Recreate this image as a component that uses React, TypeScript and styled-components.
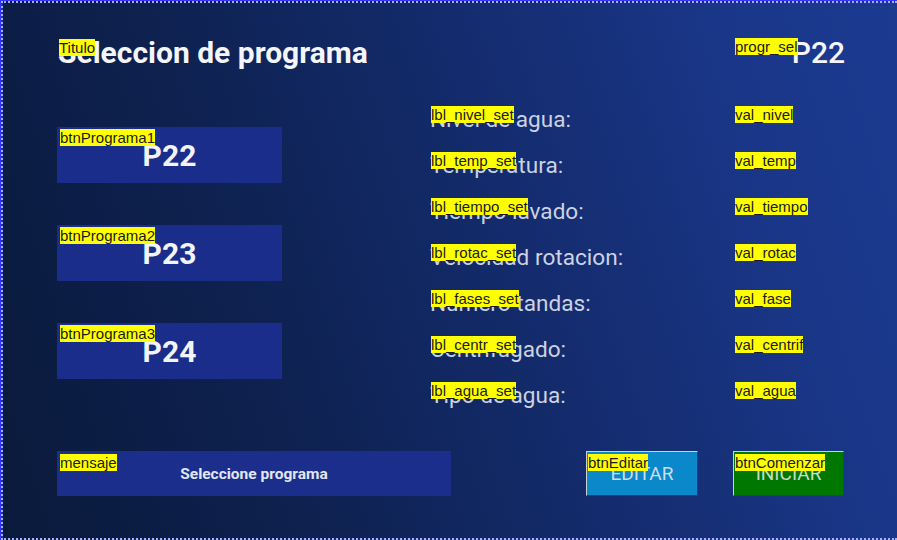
import styled, { createGlobalStyle } from "styled-components";

const GlobalStyle = createGlobalStyle`
    html, body {
        margin: 0;
        padding: 0;
        background: #ffffff;
    }
    #root {
        width: 897px;
        height: 540px;
    }
`;

const Screen = styled.div`
    width: 897px;
    height: 540px;
    box-sizing: border-box;
    border-top: 1px solid #3434ff;
    background: #3434ff;
    overflow: hidden;
`;

// marco punteado del formulario
const Frame = styled.div`
    box-sizing: border-box;
    height: 539px;
    margin-left: 1px;
    border-top: 2px dotted #a9b0ff;
    border-left: 2px dotted #a9b0ff;
    border-bottom: 2px dotted #a9b0ff;
    padding: 35px 52px 0 54px;
    background: linear-gradient(72deg, #0a1a3b 0%, #0e2150 30%, #142c6e 58%, #1a378a 85%, #1b3a90 100%);
    font-family: Roboto, "Liberation Sans", sans-serif;
    color: #ffffff;
    display: flex;
    flex-direction: column;
`;

const Widget = styled.div`
    position: relative;
`;

// etiqueta amarilla con el nombre del objeto
const Tag = styled.span<{ $dx?: number; $dy?: number }>`
    position: absolute;
    top: ${(p) => p.$dy ?? 1}px;
    left: ${(p) => p.$dx ?? 1}px;
    background: #ffff00;
    color: #1a1a1a;
    font-family: "Liberation Sans", Arial, sans-serif;
    font-size: 15px;
    font-weight: 400;
    letter-spacing: 0;
    line-height: 17px;
    padding: 0;
    white-space: nowrap;
    z-index: 2;
`;

const Header = styled.div`
    display: flex;
    justify-content: space-between;
    height: 30px;
`;

const Title = styled.div`
    font-size: 30px;
    line-height: 30px;
    font-weight: 700;
    color: #f4f6fb;
    padding-left: 1px;
`;

const Selected = styled(Widget)`
    width: 110px;
    text-align: right;
    font-size: 30px;
    line-height: 30px;
    font-weight: 500;
    color: #f4f6fb;
`;

const Body = styled.div`
    display: flex;
    margin-top: 38px;
`;

const ProgramList = styled.div`
    width: 225px;
    padding-top: 21px;
    display: flex;
    flex-direction: column;
    gap: 42px;
    margin-right: 148px;
`;

const ProgramButton = styled(Widget)`
    height: 56px;
    background: #1a2d8a;
    display: flex;
    align-items: center;
    justify-content: center;
    font-size: 30px;
    font-weight: 700;
    color: #f2f4fa;
`;

const Fields = styled.div`
    display: grid;
    grid-template-columns: 305px 110px;
    grid-auto-rows: 28px;
    row-gap: 18px;
`;

const FieldLabel = styled(Widget)`
    font-size: 22.6px;
    line-height: 28px;
    color: #ccd2e2;
    white-space: nowrap;
`;

const FieldValue = styled(Widget)`
    font-size: 22px;
    line-height: 28px;
    color: #ffffff;
`;

const Footer = styled.div`
    display: flex;
    margin-top: 41px;
`;

const Message = styled(Widget)`
    width: 394px;
    height: 45px;
    background: #1b2e8b;
    display: flex;
    align-items: center;
    justify-content: center;
    font-size: 15.5px;
    font-weight: 700;
    color: #e2e6f2;
    margin-right: 135px;
`;

const ActionButton = styled(Widget)<{ $bg: string; $fg: string; $gap?: number }>`
    box-sizing: border-box;
    width: ${(p) => (p.$gap ? 112 : 111)}px;
    height: 45px;
    margin-right: ${(p) => p.$gap ?? 0}px;
    background: ${(p) => p.$bg};
    border-top: 1px solid #d0d0d0;
    border-left: 1px solid #d0d0d0;
    border-right: 1px solid #3a3a4a;
    border-bottom: 1px solid #3a3a4a;
    display: flex;
    align-items: center;
    justify-content: center;
    font-size: 19px;
    color: ${(p) => p.$fg};
`;

const programs = ["P22", "P23", "P24"];

const fields = [
    { tag: "lbl_nivel_set", text: "Nivel de agua:", val: "val_nivel" },
    { tag: "lbl_temp_set", text: "Temperatura:", val: "val_temp" },
    { tag: "lbl_tiempo_set", text: "Tiempo lavado:", val: "val_tiempo" },
    { tag: "lbl_rotac_set", text: "Velocidad rotacion:", val: "val_rotac" },
    { tag: "lbl_fases_set", text: "Numero tandas:", val: "val_fase" },
    { tag: "lbl_centr_set", text: "Centrifugado:", val: "val_centrif" },
    { tag: "lbl_agua_set", text: "Tipo de agua:", val: "val_agua" },
];

export default function App() {
    return (
        <Screen>
            <GlobalStyle />
            <Frame>
                <Header>
                    <Widget>
                        <Tag $dx={2}>Titulo</Tag>
                        <Title>Seleccion de programa</Title>
                    </Widget>
                    <Selected>
                        <Tag $dx={0} $dy={0}>progr_sel</Tag>
                        P22
                    </Selected>
                </Header>

                <Body>
                    <ProgramList>
                        {programs.map((p, i) => (
                            <ProgramButton key={p}>
                                <Tag $dx={3} $dy={2}>btnPrograma{i + 1}</Tag>
                                {p}
                            </ProgramButton>
                        ))}
                    </ProgramList>

                    <Fields>
                        {fields.map((f) => [
                            <FieldLabel key={f.tag}>
                                <Tag $dy={0}>{f.tag}</Tag>
                                {f.text}
                            </FieldLabel>,
                            <FieldValue key={f.val}>
                                <Tag $dx={0} $dy={0}>{f.val}</Tag>
                            </FieldValue>,
                        ])}
                    </Fields>
                </Body>

                <Footer>
                    <Message>
                        <Tag $dx={3} $dy={3}>mensaje</Tag>
                        Seleccione programa
                    </Message>
                    <ActionButton $bg="#0a88c9" $fg="#cddcec" $gap={35}>
                        <Tag $dx={1} $dy={2}>btnEditar</Tag>
                        EDITAR
                    </ActionButton>
                    <ActionButton $bg="#007800" $fg="#c8dcc8">
                        <Tag $dx={1} $dy={2}>btnComenzar</Tag>
                        INICIAR
                    </ActionButton>
                </Footer>
            </Frame>
        </Screen>
    );
}
